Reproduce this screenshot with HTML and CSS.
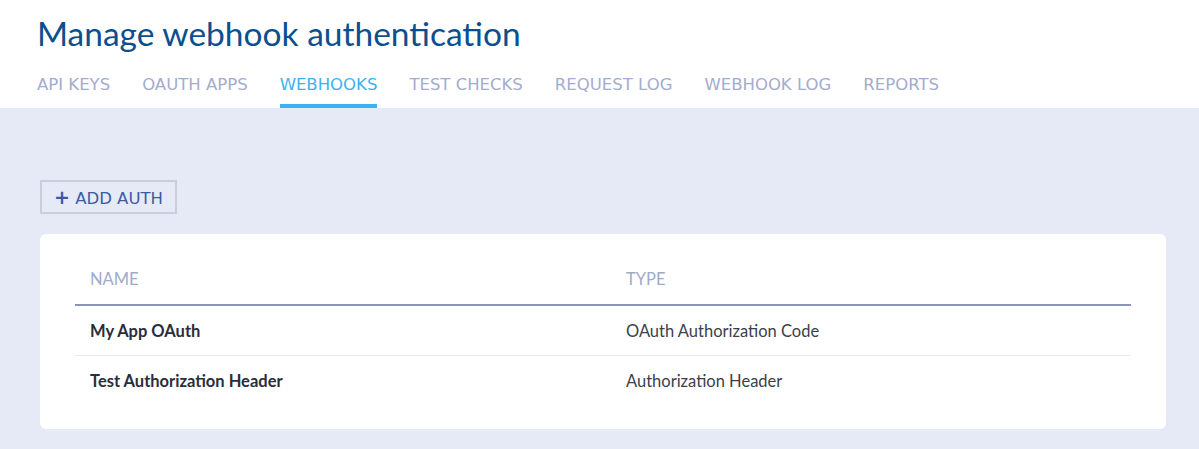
FILE: index.html
```html
<!DOCTYPE html>
<html lang="en">
<head>
    <meta charset="UTF-8">
    <title>Manage webhook authentication</title>
    <link rel="stylesheet" href="styles.css">
</head>
<body>
    <header class="page-header">
        <h1>Manage webhook authentication</h1>
        <nav class="tabs">
            <a href="#">API KEYS</a>
            <a href="#">OAUTH APPS</a>
            <a href="#" class="active">WEBHOOKS</a>
            <a href="#">TEST CHECKS</a>
            <a href="#">REQUEST LOG</a>
            <a href="#">WEBHOOK LOG</a>
            <a href="#">REPORTS</a>
        </nav>
    </header>

    <main class="content">
        <button class="add-btn"><span class="plus">+</span> ADD AUTH</button>

        <div class="card">
            <table class="auth-table">
                <thead>
                    <tr>
                        <th class="col-name">NAME</th>
                        <th>TYPE</th>
                    </tr>
                </thead>
                <tbody>
                    <tr>
                        <td class="name">My App OAuth</td>
                        <td>OAuth Authorization Code</td>
                    </tr>
                    <tr>
                        <td class="name">Test Authorization Header</td>
                        <td>Authorization Header</td>
                    </tr>
                </tbody>
            </table>
        </div>
    </main>
</body>
</html>
```

FILE: styles.css
```css
body {
    margin: 0;
    font-family: Lato, sans-serif;
    background-color: #e6eaf6;
}
.page-header {
    background: #ffffff;
    padding: 13px 37px 0;
}
h1 {
    margin: 0;
    font-weight: 400;
    font-size: 33.5px;
    line-height: 40px;
    color: #0b4f8e;
}
.tabs {
    display: flex;
    gap: 32px;
    margin-top: 18px;
}
.tabs a {
    font-family: "DejaVu Sans", sans-serif;
    font-size: 16.5px;
    color: #a3acce;
    text-decoration: none;
    padding: 4px 0 10px;
    border-bottom: 4px solid transparent;
}
.tabs a.active {
    color: #3db2f2;
    border-bottom-color: #3db2f2;
}
.content {
    padding: 72px 33px 20px 40px;
}
.add-btn {
    font-family: "DejaVu Sans", sans-serif;
    font-size: 16.5px;
    color: #3a5aa6;
    background: transparent;
    border: 2px solid #c8cde0;
    height: 34px;
    padding: 0 12px;
}
.plus {
    font-weight: 700;
    font-size: 19px;
}
.card {
    background: #ffffff;
    border-radius: 6px;
    margin-top: 20px;
    padding: 20px 35px 24px;
}
.auth-table {
    width: 100%;
    border-collapse: collapse;
    font-size: 16.5px;
}
.auth-table th {
    text-align: left;
    font-weight: 400;
    color: #a0aacb;
    height: 50px;
    padding: 0 15px;
    border-bottom: 2px solid #8a96b8;
}
.auth-table .col-name {
    width: 506px;
}
.auth-table td {
    height: 49px;
    padding: 0 15px;
    color: #3b3f4d;
    border-bottom: 1px solid #e8eaf2;
}
.auth-table tr:last-child td {
    border-bottom: none;
}
.auth-table td.name {
    font-weight: 700;
    color: #2a2e3c;
}
```
